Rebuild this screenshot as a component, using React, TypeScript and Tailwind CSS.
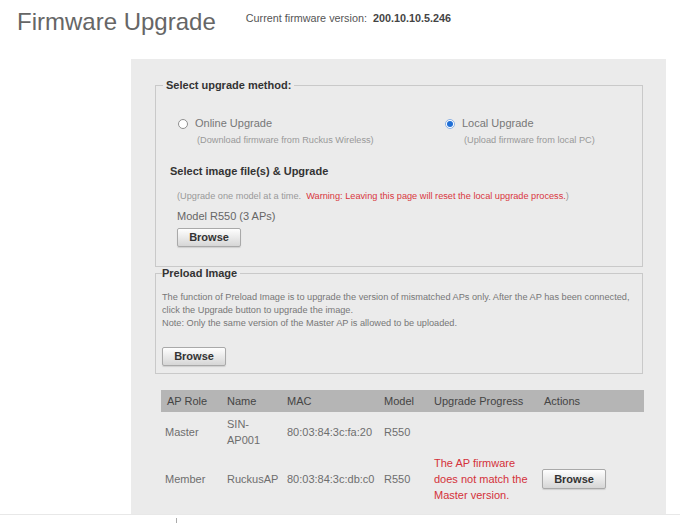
import React from 'react'

const FONT = "font-['Liberation_Sans',Arial,sans-serif]"

function BrowseButton({ className = '' }: { className?: string }) {
  return (
    <button
      className={`h-[19px] w-[64px] rounded-[2px] border border-[#a9a9a9] bg-linear-to-b from-[#fefefe] to-[#d6d6d6] text-[11px] leading-none font-bold text-[#333] shadow-[0_1px_1px_rgba(0,0,0,0.12)] ${className}`}
    >
      Browse
    </button>
  )
}

function Radio({ checked }: { checked?: boolean }) {
  if (checked) {
    return (
      <span className="flex h-[10px] w-[10px] items-center justify-center rounded-full border border-[#8ab0e4] bg-white">
        <span className="h-[6px] w-[6px] rounded-full bg-[#1f6fd6]" />
      </span>
    )
  }
  return <span className="h-[10px] w-[10px] rounded-full border border-[#8f8f8f] bg-white" />
}

const COLS = 'grid grid-cols-[60px_60px_97px_50px_110px_106px]'

export default function App() {
  return (
    <div className={`${FONT} min-h-[523px] w-[680px] bg-white`}>
      {/* Header */}
      <div className="flex h-[59px] items-start pt-[8px] pl-[17px]">
        <h1 className="text-[24px] leading-[28px] font-normal text-[#666]">Firmware Upgrade</h1>
        <div className="mt-[4px] ml-[30px] text-[10.8px] leading-[13px] text-[#555]">
          Current firmware version:&nbsp;&nbsp;<span className="font-bold text-[#444]">200.10.10.5.246</span>
        </div>
      </div>

      {/* Panel */}
      <div className="ml-[131px] h-[455px] w-[535px] bg-[#ebebeb] pt-[20px] pr-[23px] pl-[24px]">
        {/* Upgrade method */}
        <fieldset className="border border-[#c9c9c9] pl-[7px]">
          <legend className="px-[3px] text-[11px] leading-[13px] font-bold text-[#333]">Select upgrade method:</legend>

          <div className="mt-[25px] ml-[15px] flex">
            <div className="w-[267px]">
              <div className="flex items-center gap-[7px] text-[11px] leading-[13px] text-[#777]">
                <Radio />
                Online Upgrade
              </div>
              <div className="mt-[4px] ml-[19px] text-[9.2px] leading-[12px] text-[#999]">
                (Download firmware from Ruckus Wireless)
              </div>
            </div>
            <div>
              <div className="flex items-center gap-[7px] text-[11px] leading-[13px] text-[#777]">
                <Radio checked />
                Local Upgrade
              </div>
              <div className="mt-[4px] ml-[19px] text-[9.2px] leading-[12px] text-[#999]">
                (Upload firmware from local PC)
              </div>
            </div>
          </div>

          <div className="mt-[19px] ml-[7px] text-[11px] leading-[13px] font-bold text-[#333]">
            Select image file(s) &amp; Upgrade
          </div>
          <div className="mt-[12px] ml-[14px] text-[9.2px] leading-[12px] text-[#999]">
            (Upgrade one model at a time.&nbsp;{' '}
            <span className="text-[#d9363e]">Warning: Leaving this page will reset the local upgrade process.</span>)
          </div>
          <div className="mt-[8px] ml-[14px] text-[11px] leading-[13px] text-[#666]">Model R550 (3 APs)</div>
          <div className="mt-[5px] mb-[19px] ml-[14px] flex">
            <BrowseButton />
          </div>
        </fieldset>

        {/* Preload image */}
        <fieldset className="border border-[#c9c9c9] pl-[6px]">
          <legend className="pr-[3px] text-[11px] leading-[13px] font-bold text-[#333]">Preload Image</legend>
          <div className="mt-[11px] text-[9.2px] leading-[13px] text-[#777]">
            The function of Preload Image is to upgrade the version of mismatched APs only. After the AP has been connected,
            <br />
            click the Upgrade button to upgrade the image.
            <br />
            Note: Only the same version of the Master AP is allowed to be uploaded.
          </div>
          <div className="mt-[17px] mb-[7px] flex">
            <BrowseButton />
          </div>
        </fieldset>

        {/* AP table */}
        <div className="mt-[16px] ml-[6px] w-[483px] text-[11px] leading-[16px]">
          <div className={`${COLS} h-[22px] items-center bg-[#b5b5b5] text-[#444]`}>
            <div className="pl-[6px]">AP Role</div>
            <div className="pl-[6px]">Name</div>
            <div className="pl-[6px]">MAC</div>
            <div className="pl-[6px]">Model</div>
            <div className="pl-[6px]">Upgrade Progress</div>
            <div className="pl-[6px]">Actions</div>
          </div>
          <div className={`${COLS} h-[40px] items-center text-[#6e6e6e]`}>
            <div className="pl-[4px]">Master</div>
            <div className="pl-[6px]">
              SIN-
              <br />
              AP001
            </div>
            <div className="pl-[6px]">80:03:84:3c:fa:20</div>
            <div className="pl-[6px]">R550</div>
            <div />
            <div />
          </div>
          <div className={`${COLS} h-[54px] items-center text-[#6e6e6e]`}>
            <div className="pl-[4px]">Member</div>
            <div className="pl-[6px]">RuckusAP</div>
            <div className="pl-[6px]">80:03:84:3c:db:c0</div>
            <div className="pl-[6px]">R550</div>
            <div className="pl-[6px] text-[#d4313a]">
              The AP firmware
              <br />
              does not match the
              <br />
              Master version.
            </div>
            <div className="flex pl-[4px]">
              <BrowseButton className="h-[20px]" />
            </div>
          </div>
        </div>
      </div>

      {/* Footer line */}
      <div className="border-t border-[#e8e8e8]">
        <div className="mt-[3px] ml-[176px] h-[6px] w-px bg-[#aaa]" />
      </div>
    </div>
  )
}
